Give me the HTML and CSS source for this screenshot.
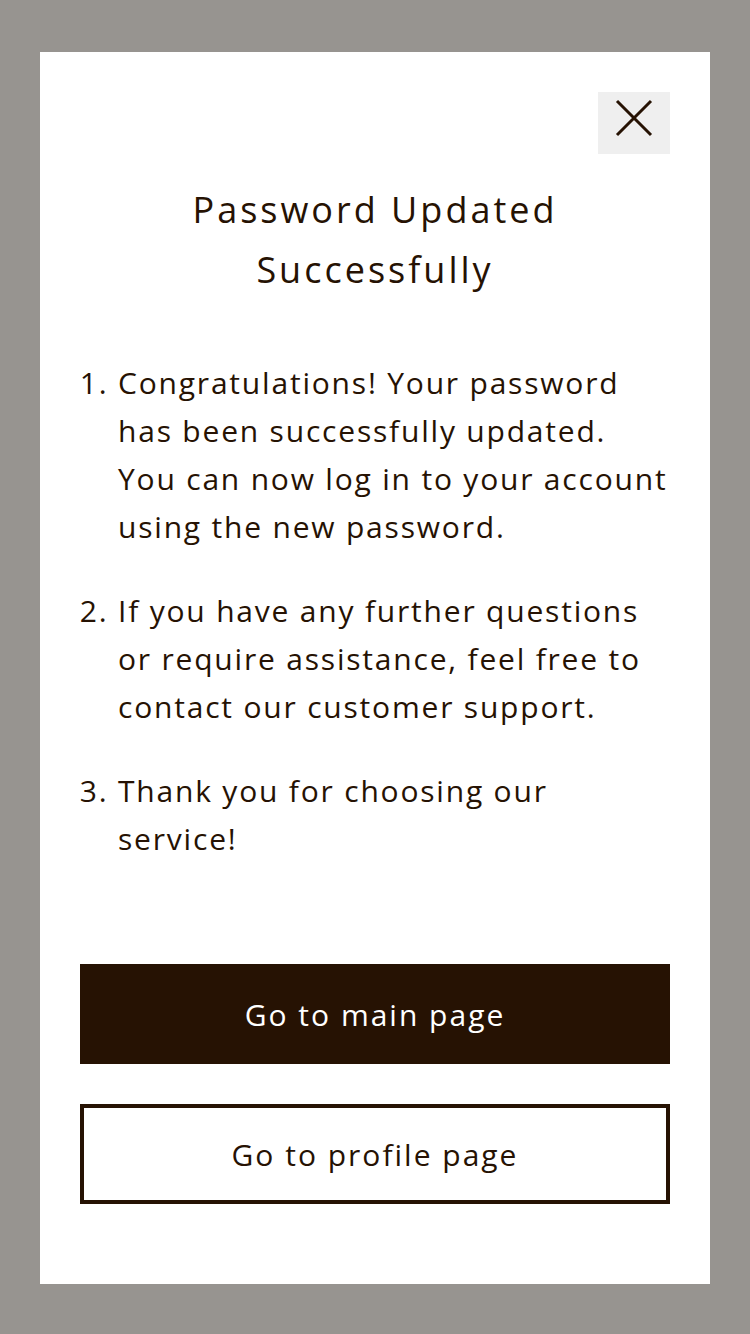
FILE: index.html
```html
<!DOCTYPE html>
<html lang="en">
<head>
<meta charset="utf-8">
<link rel="stylesheet" href="styles.css">
</head>
<body>
<div class="overlay">
  <div class="modal">
    <div class="modal-top">
      <button class="close" aria-label="Close">
        <svg width="38" height="38" viewBox="0 0 38 38"><path d="M2 2 L36 36 M36 2 L2 36" stroke="#261203" stroke-width="3" fill="none"/></svg>
      </button>
    </div>
    <h1 class="title">Password Updated<br>Successfully</h1>
    <ol class="steps">
      <li>Congratulations! Your password has been successfully updated. You can now log in to your account using the new password.</li>
      <li>If you have any further questions or require assistance, feel free to contact our customer support.</li>
      <li>Thank you for choosing our service!</li>
    </ol>
    <div class="actions">
      <button class="btn btn-primary">Go to main page</button>
      <button class="btn btn-outline">Go to profile page</button>
    </div>
  </div>
</div>
</body>
</html>
```

FILE: styles.css
```css
html, body {
  margin: 0;
  padding: 0;
}
body {
  background: #979490;
  font-family: "Open Sans", "Noto Sans", sans-serif;
  color: #261203;
}
.overlay {
  width: 750px;
  height: 1334px;
  box-sizing: border-box;
  padding: 52px 40px 50px;
}
.modal {
  background: #ffffff;
  height: 1232px;
  box-sizing: border-box;
  padding: 40px 40px 80px;
  display: flex;
  flex-direction: column;
}
.modal-top {
  display: flex;
  justify-content: flex-end;
}
.close {
  width: 72px;
  height: 62px;
  background: #efefef;
  border: none;
  padding: 7px 0 0;
  box-sizing: border-box;
  display: flex;
  align-items: flex-start;
  justify-content: center;
}
.title {
  margin: 26px 0 0;
  font-weight: 400;
  font-size: 36px;
  line-height: 60px;
  letter-spacing: 3px;
  text-align: center;
}
.steps {
  margin: 59px 0 0;
  padding: 0 0 0 38px;
  font-size: 30px;
  line-height: 48px;
  letter-spacing: 1.8px;
}
.steps li + li {
  margin-top: 36px;
}
.actions {
  margin-top: auto;
  display: flex;
  flex-direction: column;
  gap: 40px;
}
.btn {
  height: 100px;
  width: 100%;
  font-family: "Open Sans", "Noto Sans", sans-serif;
  font-size: 30px;
  letter-spacing: 2px;
  box-sizing: border-box;
  cursor: pointer;
}
.btn-primary {
  background: #261203;
  color: #ffffff;
  border: none;
}
.btn-outline {
  background: #ffffff;
  color: #261203;
  border: 4px solid #261203;
}
```
